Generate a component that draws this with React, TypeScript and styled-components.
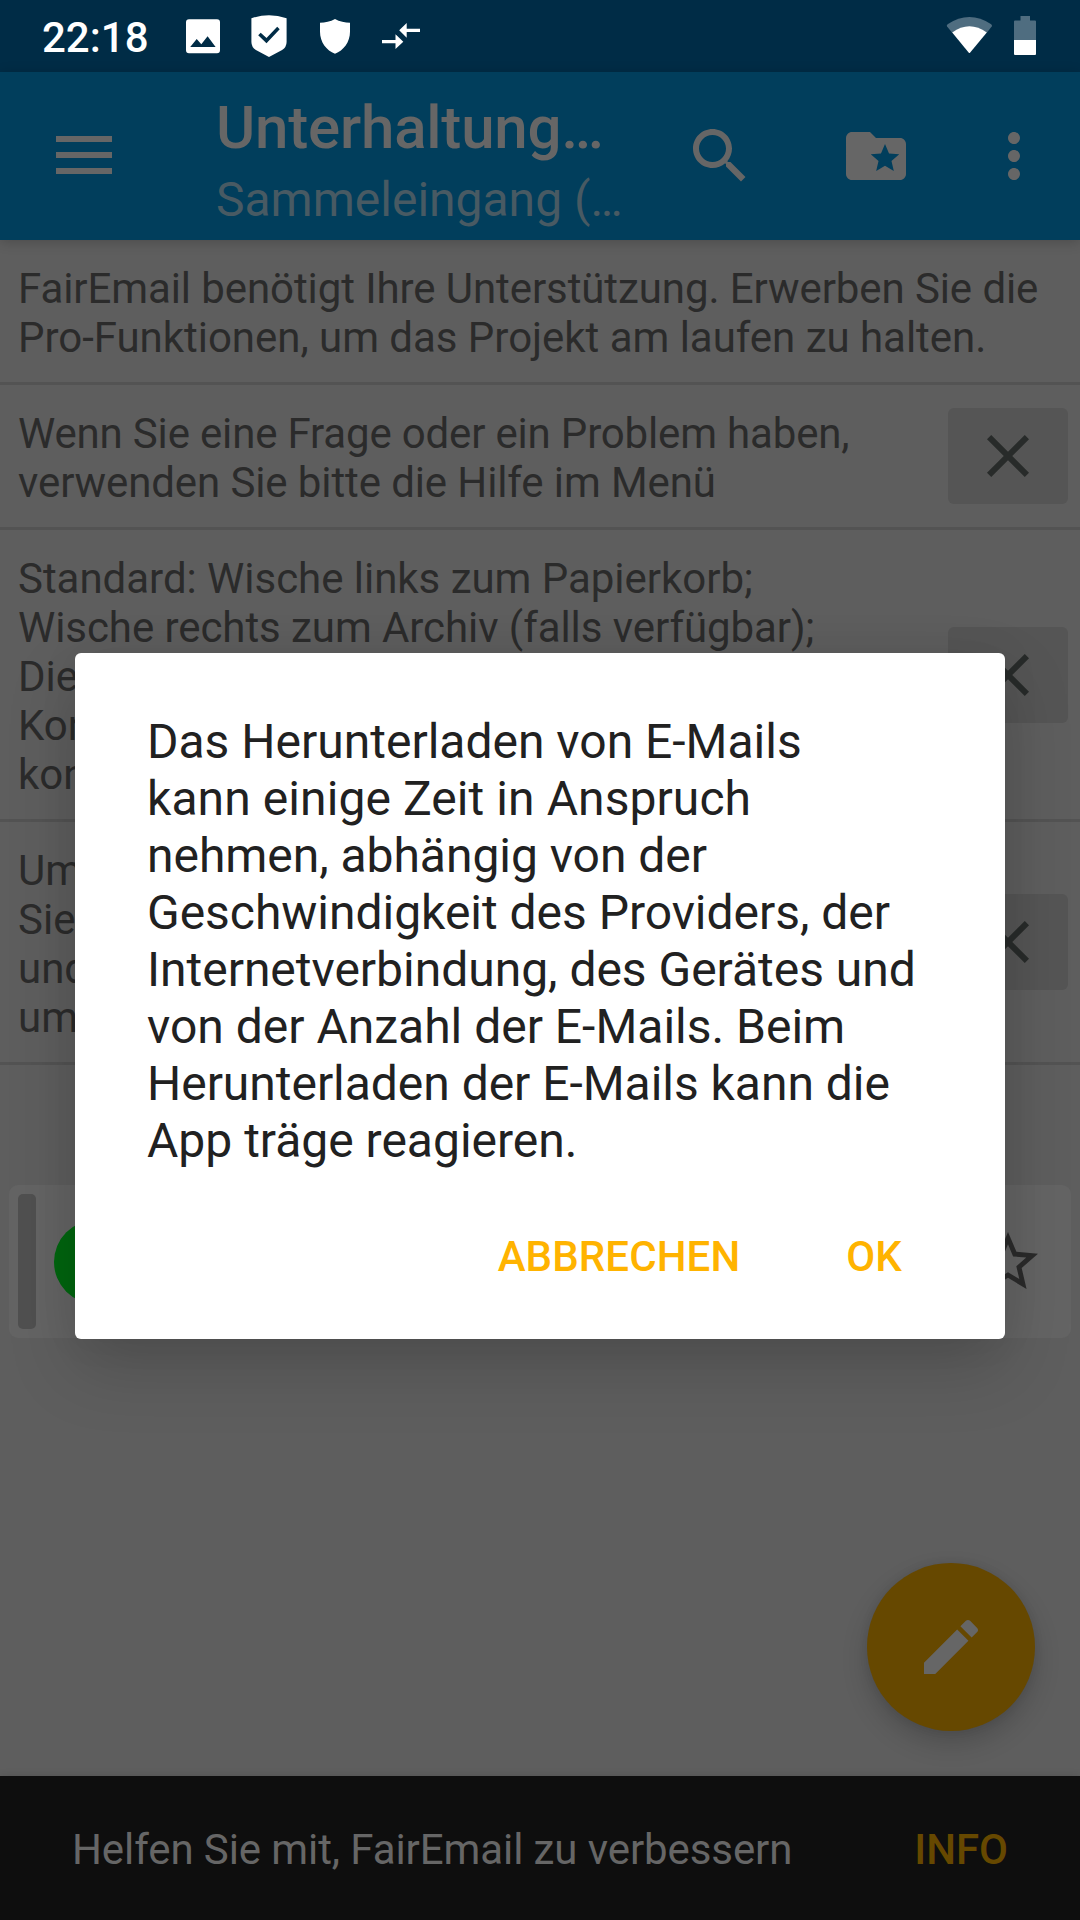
import React from "react";
import styled, { createGlobalStyle } from "styled-components";

const Global = createGlobalStyle`
  * { box-sizing: border-box; }
  html, body { margin: 0; padding: 0; background: #5e5e5e; }
  body { font-family: Roboto, "Noto Sans", sans-serif; }
  button { font: inherit; letter-spacing: inherit; border: 0; background: none; padding: 0; margin: 0; color: inherit; }
`;

const Screen = styled.div`
  position: relative;
  width: 1080px;
  height: 1920px;
  overflow: hidden;
  display: flex;
  flex-direction: column;
  background: #5e5e5e;
`;

const Icon = styled.svg<{ $w?: number; $h?: number; $color?: string }>`
  display: block;
  flex: none;
  width: ${(p) => p.$w ?? 72}px;
  height: ${(p) => p.$h ?? 72}px;
  fill: ${(p) => p.$color ?? "#666666"};
`;

const StatusBar = styled.header`
  flex: none;
  height: 72px;
  display: flex;
  align-items: flex-start;
  background: #002c46;
  color: #fff;
`;

const Clock = styled.time`
  width: 182px;
  padding: 13px 0 0 42px;
  font-size: 42px;
  line-height: 49px;
  font-weight: 500;
  white-space: nowrap;
`;

const StatusSpacer = styled.div`
  flex: 1;
`;

const AppBar = styled.nav`
  flex: none;
  height: 168px;
  display: flex;
  align-items: center;
  background: #013e5c;
  box-shadow: 0 2px 12px rgba(0, 0, 0, 0.2);
  z-index: 1;
`;

const BarButton = styled.button<{ $width: number }>`
  width: ${(p) => p.$width}px;
  height: 144px;
  display: flex;
  align-items: center;
  justify-content: center;
`;

const Titles = styled.div`
  flex: 1;
  padding: 8px 0 0 48px;
  display: flex;
  flex-direction: column;
`;

const Title = styled.h1`
  margin: 0;
  font-size: 60px;
  line-height: 71px;
  font-weight: 500;
  letter-spacing: -0.2px;
  color: #666666;
  white-space: nowrap;
`;

const Subtitle = styled.div`
  font-size: 48px;
  line-height: 57px;
  margin-top: 8px;
  color: #485a63;
  white-space: nowrap;
`;

const Content = styled.main`
  flex: 1;
  display: flex;
  flex-direction: column;
`;

const Hint = styled.section`
  flex: none;
  display: flex;
  align-items: center;
  justify-content: space-between;
  padding-right: 12px;
  border-bottom: 3px solid #535353;
`;

const HintText = styled.p`
  margin: 0;
  padding: 24px 0 20px 18px;
  font-size: 42px;
  line-height: 49px;
  color: #2b2b2b;
  white-space: nowrap;
`;

const CloseButton = styled.button`
  width: 120px;
  height: 96px;
  display: flex;
  align-items: center;
  justify-content: center;
  border-radius: 6px;
  background: #555555;
`;

const MessageCard = styled.article`
  flex: none;
  height: 153px;
  margin: 120px 9px 0;
  padding: 9px 27px 9px 9px;
  display: flex;
  align-items: center;
  border-radius: 9px;
  background: #646464;
`;

const AccountBar = styled.div`
  width: 18px;
  height: 135px;
  border-radius: 5px;
  background: #505050;
`;

const Avatar = styled.div`
  width: 84px;
  height: 84px;
  margin-left: 18px;
  margin-right: auto;
  border-radius: 50%;
  background: #00660f;
`;

const Fab = styled.button`
  position: absolute;
  right: 45px;
  bottom: 189px;
  width: 168px;
  height: 168px;
  display: flex;
  align-items: center;
  justify-content: center;
  border-radius: 50%;
  background: #664800;
  box-shadow: 0 12px 26px rgba(0, 0, 0, 0.18), 0 0 10px rgba(0, 0, 0, 0.08);
`;

const Snackbar = styled.footer`
  flex: none;
  height: 144px;
  padding: 3px 72px 0;
  display: flex;
  align-items: center;
  justify-content: space-between;
  background: #0e0e0e;
  box-shadow: 0 0 8px rgba(0, 0, 0, 0.12);
  font-size: 42px;
  line-height: 49px;
  color: #666666;
  white-space: nowrap;
`;

const SnackAction = styled.button`
  font-weight: 500;
  color: #664800;
`;

const DialogLayer = styled.div`
  position: absolute;
  inset: 0;
  z-index: 2;
  display: flex;
  align-items: flex-start;
  justify-content: center;
  padding-top: 653px;
`;

const Dialog = styled.div`
  width: 930px;
  height: 686px;
  padding: 60px 72px 0;
  display: flex;
  flex-direction: column;
  border-radius: 6px;
  background: #fff;
  box-shadow: 0 28px 68px rgba(0, 0, 0, 0.17), 0 0 40px rgba(0, 0, 0, 0.06);
`;

const DialogText = styled.p`
  margin: 0;
  font-size: 48px;
  line-height: 57px;
  color: #212121;
  white-space: nowrap;
`;

const DialogActions = styled.div`
  margin-top: 63px;
  display: flex;
  justify-content: flex-end;
  gap: 106px;
  padding-right: 31px;
`;

const DialogButton = styled.button`
  font-size: 42px;
  line-height: 49px;
  font-weight: 500;
  letter-spacing: 0.1px;
  color: #ffb300;
`;

const Line = styled.span<{ $ls?: number }>`
  display: block;
  letter-spacing: ${(p) => p.$ls ?? 0}px;
`;

type TextLine = { text: string; ls?: number };
type HintItem = { lines: TextLine[]; closable: boolean };

const hints: HintItem[] = [
  {
    lines: [
      { text: "FairEmail benötigt Ihre Unterstützung. Erwerben Sie die", ls: -0.09 },
      { text: "Pro-Funktionen, um das Projekt am laufen zu halten.", ls: -0.03 },
    ],
    closable: false,
  },
  {
    lines: [
      { text: "Wenn Sie eine Frage oder ein Problem haben,", ls: -0.17 },
      { text: "verwenden Sie bitte die Hilfe im Menü", ls: -0.11 },
    ],
    closable: true,
  },
  {
    lines: [
      { text: "Standard: Wische links zum Papierkorb;", ls: -0.03 },
      { text: "Wische rechts zum Archiv (falls verfügbar);", ls: -0.07 },
      { text: "Die" },
      { text: "Kon" },
      { text: "kon" },
    ],
    closable: true,
  },
  {
    lines: [{ text: "Um" }, { text: "Sie" }, { text: "und" }, { text: "um" }],
    closable: true,
  },
];

const dialogLines: TextLine[] = [
  { text: "Das Herunterladen von E-Mails" },
  { text: "kann einige Zeit in Anspruch", ls: 0.08 },
  { text: "nehmen, abhängig von der", ls: -0.04 },
  { text: "Geschwindigkeit des Providers, der", ls: -0.03 },
  { text: "Internetverbindung, des Gerätes und", ls: -0.02 },
  { text: "von der Anzahl der E-Mails. Beim" },
  { text: "Herunterladen der E-Mails kann die", ls: -0.03 },
  { text: "App träge reagieren." },
];

export default function App() {
  return (
    <>
      <Global />
      <Screen>
        <StatusBar>
          <Clock>22:18</Clock>
          <Icon viewBox="182 0 258 72" $w={258} $color="#fff">
            <path
              fillRule="evenodd"
              d="M189 19.3h28a3 3 0 0 1 3 3v28a3 3 0 0 1-3 3h-28a3 3 0 0 1-3-3v-28a3 3 0 0 1 3-3zM190.2 47h25.4l-8-10.7-6.3 8-4.6-5.4z"
            />
            <path
              fillRule="evenodd"
              d="M251.4 18.2Q269 12.2 286.6 18.2V42q0 5-4.5 8L269 57l-13.1-7q-4.5-3-4.5-8zM260.7 32.8l-2.5 2.5 8.3 8 13.2-14-2.5-2.5-10.7 11.3z"
            />
            <path d="M335 19c4.5 2.5 10 3.7 15 3.7v9C350 42 343.5 50.5 335 53.7 326.5 50.5 320 42 320 31.7v-9c5 0 10.5-1.2 15-3.7z" />
            <path d="M382 40h13.5v-5.7l7.8 7.4-7.8 7.3v-5.7H382zM420 28.7h-13.3V23l-7.5 7.3 7.5 7.4V32H420z" />
          </Icon>
          <StatusSpacer />
          <Icon viewBox="940 0 140 72" $w={140} $color="#fff">
            <path
              fill="#4f6d80"
              d="M947.6 24.2Q969.400 9.800 991.200 24.200 992.600 25.300 991.700 26.600L986.800 32.800H952.200L947.100 26.600Q946.200 25.300 947.600 24.200z"
            />
            <path d="M952.2 32.5Q969.4 20 986.800 32.5L970 52.800q-.6.6-1.200 0z" />
            <path fill="#4f6d80" d="M1014 40V21.500q0-1 1-1h5.500V16h9.500v4.500h5q1 0 1 1V40z" />
            <path d="M1014 40h22v14q0 1-1 1h-20q-1 0-1-1z" />
          </Icon>
        </StatusBar>

        <AppBar>
          <BarButton $width={168} aria-label="Menü">
            <Icon viewBox="0 0 72 72">
              <path d="M8 16h56v6H8zM8 32h56v6H8zM8 48h56v6H8z" />
            </Icon>
          </BarButton>
          <Titles>
            <Title>Unterhaltung…</Title>
            <Subtitle>Sammeleingang (…</Subtitle>
          </Titles>
          <BarButton $width={168} aria-label="Suchen">
            <Icon viewBox="0 0 24 24">
              <path d="M15.5 14h-.79l-.28-.27C15.41 12.59 16 11.11 16 9.5 16 5.91 13.09 3 9.5 3S3 5.91 3 9.5 5.91 16 9.5 16c1.61 0 3.09-.59 4.23-1.57l.27.28v.79l5 4.99L20.49 19l-4.99-5zm-6 0C7.01 14 5 11.99 5 9.5S7.01 5 9.5 5 14 7.01 14 9.5 11.99 14 9.5 14z" />
            </Icon>
          </BarButton>
          <BarButton $width={144} aria-label="Ordner">
            <Icon viewBox="0 0 24 24">
              <path d="M20 6h-8l-2-2H4c-1.1 0-1.99.9-1.99 2L2 18c0 1.1.9 2 2 2h16c1.1 0 2-.9 2-2V8c0-1.1-.9-2-2-2zm-2.06 11L15 15.28 12.06 17l.78-3.33-2.59-2.24 3.41-.29L15 8l1.34 3.14 3.41.29-2.59 2.24.78 3.33z" />
            </Icon>
          </BarButton>
          <BarButton $width={132} aria-label="Mehr">
            <Icon viewBox="0 0 24 24">
              <path d="M12 8c1.1 0 2-.9 2-2s-.9-2-2-2-2 .9-2 2 .9 2 2 2zm0 2c-1.1 0-2 .9-2 2s.9 2 2 2 2-.9 2-2-.9-2-2-2zm0 6c-1.1 0-2 .9-2 2s.9 2 2 2 2-.9 2-2-.9-2-2-2z" />
            </Icon>
          </BarButton>
        </AppBar>

        <Content>
          {hints.map((hint, i) => (
            <Hint key={i}>
              <HintText>
                {hint.lines.map((line) => (
                  <Line key={line.text} $ls={line.ls}>
                    {line.text}
                  </Line>
                ))}
              </HintText>
              {hint.closable && (
                <CloseButton aria-label="Schließen">
                  <Icon viewBox="0 0 24 24" $color="#282b2a">
                    <path d="M19 6.41L17.59 5 12 10.59 6.41 5 5 6.41 10.59 12 5 17.59 6.41 19 12 13.41 17.59 19 19 17.59 13.41 12z" />
                  </Icon>
                </CloseButton>
              )}
            </Hint>
          ))}
          <MessageCard>
            <AccountBar />
            <Avatar />
            <Icon viewBox="0 0 24 24" $color="#2b2b2b">
              <path d="M22 9.24l-7.19-.62L12 2 9.19 8.63 2 9.24l5.46 4.73L5.82 21 12 17.27 18.18 21l-1.63-7.03L22 9.24zM12 15.4l-3.76 2.27 1-4.28-3.32-2.88 4.38-.38L12 6.1l1.71 4.04 4.38.38-3.32 2.88 1 4.28L12 15.4z" />
            </Icon>
          </MessageCard>
        </Content>

        <Fab aria-label="Verfassen">
          <Icon viewBox="0 0 24 24">
            <path d="M3 17.25V21h3.75L17.81 9.94l-3.75-3.75L3 17.25zM20.71 7.04c.39-.39.39-1.02 0-1.41l-2.34-2.34c-.39-.39-1.02-.39-1.41 0l-1.83 1.83 3.75 3.75 1.83-1.83z" />
          </Icon>
        </Fab>

        <Snackbar>
          <Line $ls={-0.09}>Helfen Sie mit, FairEmail zu verbessern</Line>
          <SnackAction>INFO</SnackAction>
        </Snackbar>

        <DialogLayer>
          <Dialog role="dialog">
            <DialogText>
              {dialogLines.map((line) => (
                <Line key={line.text} $ls={line.ls}>
                  {line.text}
                </Line>
              ))}
            </DialogText>
            <DialogActions>
              <DialogButton>ABBRECHEN</DialogButton>
              <DialogButton>OK</DialogButton>
            </DialogActions>
          </Dialog>
        </DialogLayer>
      </Screen>
    </>
  );
}
